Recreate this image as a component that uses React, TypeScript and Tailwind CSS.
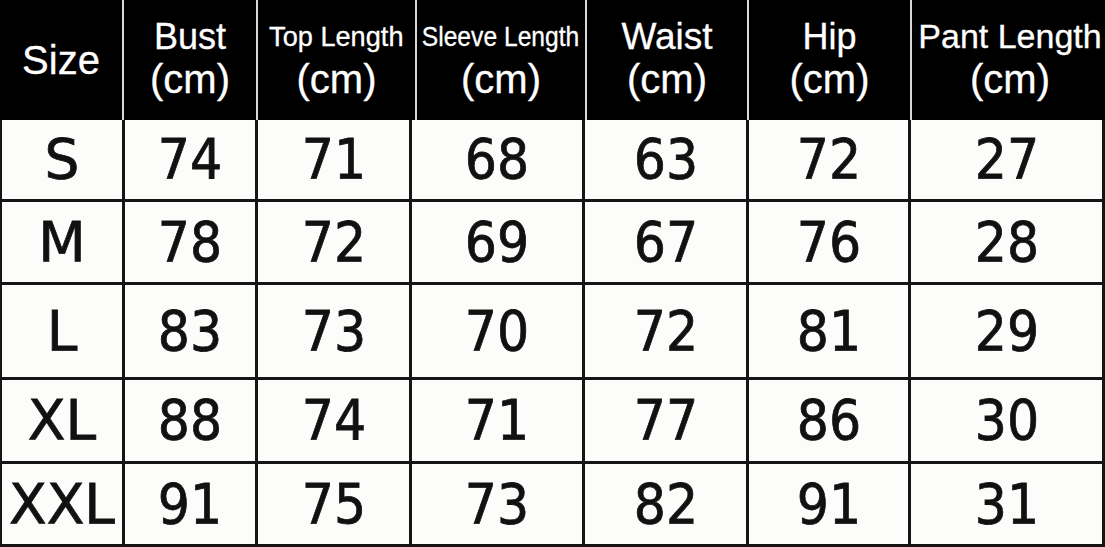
import React from "react";

const headers: { top: string; topClass: string }[] = [
  { top: "Bust", topClass: "text-[36px]" },
  { top: "Top Length", topClass: "text-[28px] scale-x-[0.97]" },
  { top: "Sleeve Length", topClass: "text-[28px] scale-x-[0.88]" },
  { top: "Waist", topClass: "text-[37px]" },
  { top: "Hip", topClass: "text-[36px]" },
  { top: "Pant Length", topClass: "text-[34px]" },
];

const rows: { size: string; vals: string[]; h: string }[] = [
  { size: "S", vals: ["74", "71", "68", "63", "72", "27"], h: "h-[79px]" },
  { size: "M", vals: ["78", "72", "69", "67", "76", "28"], h: "h-[80px]" },
  { size: "L", vals: ["83", "73", "70", "72", "81", "29"], h: "h-[92px]" },
  { size: "XL", vals: ["88", "74", "71", "77", "86", "30"], h: "h-[81px]" },
  { size: "XXL", vals: ["91", "75", "73", "82", "91", "31"], h: "h-[80px]" },
];

export default function App() {
  return (
    <div className="w-[1105px] h-[547px] bg-[#111] flex flex-col overflow-hidden">
      {/* Header */}
      <div
        className="h-[120px] bg-[#d8d8d8] grid grid-cols-[122px_132px_157px_168px_160px_161px_196px] gap-x-[2px] text-white [-webkit-text-stroke:0.3px_#fff]"
        style={{ fontFamily: '"Liberation Sans", Arial, sans-serif' }}
      >
        <div className="bg-black flex items-center justify-center">
          <span className="text-[40px] leading-none">Size</span>
        </div>
        {headers.map((h, i) => (
          <div key={i} className="bg-black flex flex-col items-center justify-center pb-[4px]">
            <span className={`inline-block leading-[43px] whitespace-nowrap ${h.topClass}`}>{h.top}</span>
            <span className="inline-block text-[40px] leading-[43px]">(cm)</span>
          </div>
        ))}
      </div>
      {/* Body */}
      <div
        className="flex-1 bg-[#151515] pl-[2px] pr-[3px] pb-[3px] flex flex-col gap-y-[3px] text-[#111] [-webkit-text-stroke:0.8px_#111]"
        style={{ fontFamily: '"DejaVu Sans", Verdana, sans-serif' }}
      >
        {rows.map((r, ri) => (
          <div
            key={ri}
            className={`${r.h} grid grid-cols-[120px_130px_151px_170px_161px_159px_191px] gap-x-[3px]`}
          >
            <div className="bg-[#fcfcfa] flex items-center justify-center">
              <span className="inline-block text-[55px] leading-none">{r.size}</span>
            </div>
            {r.vals.map((v, vi) => (
              <div key={vi} className="bg-[#fcfcfa] flex items-center justify-center">
                <span className="inline-block text-[55px] leading-none scale-x-[0.92]">{v}</span>
              </div>
            ))}
          </div>
        ))}
      </div>
    </div>
  );
}
